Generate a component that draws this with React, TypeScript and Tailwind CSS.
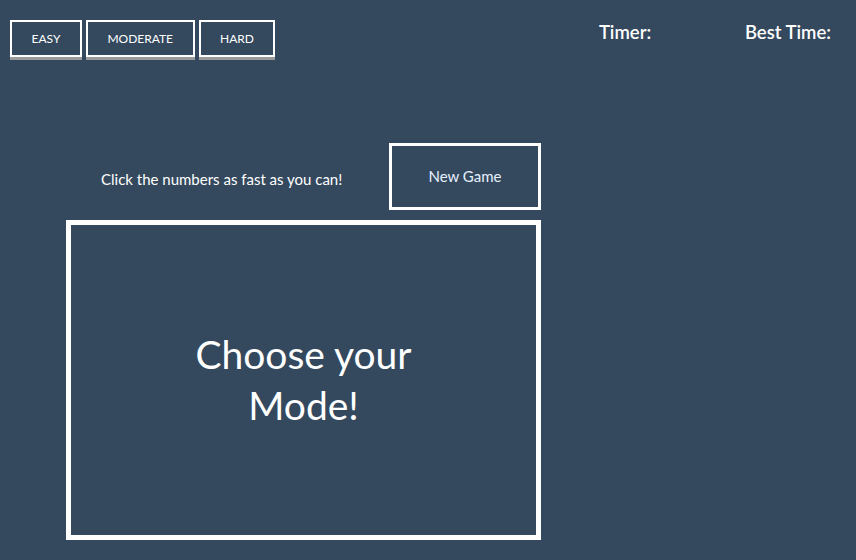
import React from 'react';

const modes = ['EASY', 'MODERATE', 'HARD'];

function ModeButton({ label }: { label: string }) {
  return (
    <button className="h-[37px] border-2 border-white bg-transparent px-[19.5px] text-[12px] uppercase text-white shadow-[0_3px_0_#9a9a9a]">
      {label}
    </button>
  );
}

export default function App() {
  return (
    <div
      className="h-[560px] w-[856px] overflow-hidden bg-[#34495e] text-white"
      style={{ fontFamily: 'Lato, "Open Sans", sans-serif' }}
    >
      <header className="flex items-start pl-[10px] pt-[20px]">
        <div className="flex gap-[4px]">
          {modes.map((m) => (
            <ModeButton key={m} label={m} />
          ))}
        </div>
        <div className="ml-auto -mt-[1px] flex pr-[25px] text-[18.5px] font-semibold">
          <span className="w-[146px]">Timer:</span>
          <span>Best Time:</span>
        </div>
      </header>

      <main className="ml-[66px] mt-[86px] w-[475px]">
        <div className="flex items-center">
          <p className="flex-1 pl-[35px] pt-[6px] text-[15px]">Click the numbers as fast as you can!</p>
          <button className="h-[67px] w-[152px] border-[3px] border-white text-[15px] text-[#e6f0ff]">
            New Game
          </button>
        </div>
        <div className="mt-[10px] flex h-[320px] items-center justify-center border-[5px] border-white">
          <h1 className="w-[260px] text-center text-[39px] leading-[51px]">Choose your Mode!</h1>
        </div>
      </main>
    </div>
  );
}
